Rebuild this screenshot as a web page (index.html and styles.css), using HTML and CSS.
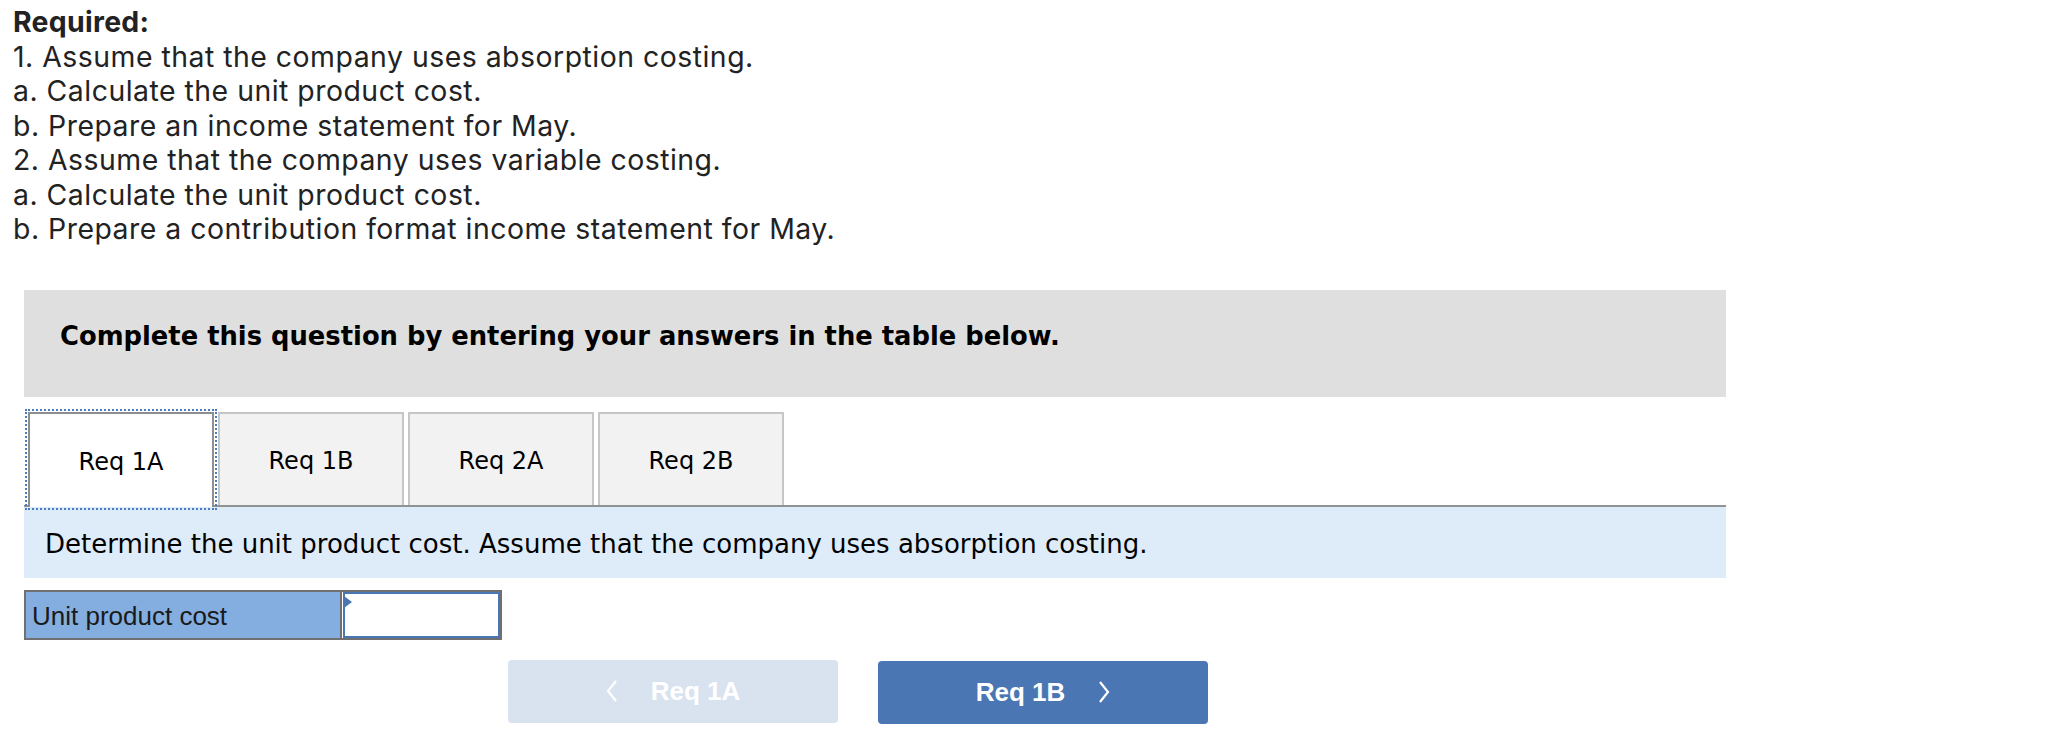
FILE: index.html
```html
<!DOCTYPE html>
<html lang="en">
<head>
<meta charset="utf-8">
<title>Required</title>
<link rel="stylesheet" href="styles.css">
</head>
<body>
<div class="page">
  <div class="required">
    <p class="req-title">Required:</p>
    <p>1. Assume that the company uses absorption costing.</p>
    <p>a. Calculate the unit product cost.</p>
    <p>b. Prepare an income statement for May.</p>
    <p>2. Assume that the company uses variable costing.</p>
    <p>a. Calculate the unit product cost.</p>
    <p>b. Prepare a contribution format income statement for May.</p>
  </div>

  <div class="question">
    <div class="instructions">Complete this question by entering your answers in the table below.</div>

    <div class="tabs">
      <div class="tab active">Req 1A</div>
      <div class="tab">Req 1B</div>
      <div class="tab">Req 2A</div>
      <div class="tab">Req 2B</div>
    </div>

    <div class="prompt">Determine the unit product cost. Assume that the company uses absorption costing.</div>

    <div class="answer">
      <div class="answer-label">Unit product cost</div>
      <div class="answer-input"><span class="marker"></span></div>
    </div>

    <div class="nav">
      <div class="nav-btn prev">
        <svg class="chev" width="12" height="22" viewBox="0 0 12 22"><polyline points="10,1 2,11 10,21" fill="none" stroke="#ffffff" stroke-width="2.2"/></svg>
        <span>Req 1A</span>
      </div>
      <div class="nav-btn next">
        <span>Req 1B</span>
        <svg class="chev" width="12" height="22" viewBox="0 0 12 22"><polyline points="2,1 10,11 2,21" fill="none" stroke="#ffffff" stroke-width="2.2"/></svg>
      </div>
    </div>
  </div>
</div>
</body>
</html>
```

FILE: styles.css
```css
* { box-sizing: border-box; }

html, body {
  margin: 0;
  padding: 0;
  background: #ffffff;
}

.page {
  width: 2056px;
  height: 752px;
  overflow: hidden;
  padding: 5px 0 0 0;
}

.required {
  padding-left: 13px;
  font-family: "Inter", "Lato", sans-serif;
  font-size: 28.4px;
  line-height: 34.5px;
  letter-spacing: 0.5px;
  color: #222222;
}

.required p {
  margin: 0;
}

.required .req-title {
  font-weight: 700;
  letter-spacing: 0.3px;
}

.question {
  margin: 43px 0 0 24px;
  width: 1702px;
}

.instructions {
  background: #dfdfdf;
  height: 107px;
  padding: 30px 0 0 36px;
  font-family: "DejaVu Sans", Verdana, sans-serif;
  font-weight: 700;
  font-size: 25.8px;
  line-height: 32px;
  color: #000000;
}

.tabs {
  display: flex;
  gap: 4px;
  margin-top: 15px;
  padding-left: 4px;
  border-bottom: 2px solid #8f9393;
}

.tab {
  width: 186px;
  height: 93px;
  display: flex;
  align-items: center;
  justify-content: center;
  padding-top: 4px;
  background: #f2f2f2;
  border: 2px solid #c6c6c6;
  border-bottom: none;
  font-family: "DejaVu Sans", Verdana, sans-serif;
  font-size: 24px;
  color: #000000;
}

.tab.active {
  background: #ffffff;
  border-color: #8e8e8e;
  margin-bottom: -2px;
  height: 95px;
  outline: 2px dotted #4a7cc4;
  outline-offset: 1px;
}

.prompt {
  background: #deebf8;
  height: 71px;
  padding: 4px 0 0 21px;
  display: flex;
  align-items: center;
  font-family: "DejaVu Sans", Verdana, sans-serif;
  font-size: 26px;
  color: #000000;
}

.answer {
  display: flex;
  width: 478px;
  height: 50px;
  margin-top: 12px;
  border: 2px solid #707070;
}

.answer-label {
  width: 316px;
  background: #84aee0;
  border-right: 2px solid #707070;
  padding: 3px 0 0 6px;
  display: flex;
  align-items: center;
  font-family: "Liberation Sans", Arial, sans-serif;
  font-size: 26px;
  color: #1a1a1a;
}

.answer-input {
  position: relative;
  flex: 1;
  background: #ffffff;
  border: 2px solid #4a77b4;
  margin-left: 1px;
}

.marker {
  position: absolute;
  left: -1px;
  top: 2px;
  width: 0;
  height: 0;
  border-top: 6px solid transparent;
  border-bottom: 6px solid transparent;
  border-left: 8px solid #4a77b4;
}

.nav {
  display: flex;
  gap: 40px;
  margin: 20px 0 0 484px;
}

.nav-btn {
  width: 330px;
  height: 63px;
  border-radius: 4px;
  display: flex;
  align-items: center;
  justify-content: center;
  gap: 33px;
  font-family: "Liberation Sans", Arial, sans-serif;
  font-weight: 700;
  font-size: 26px;
  color: #ffffff;
}

.nav-btn.prev {
  background: #d9e3ef;
}

.nav-btn.next {
  background: #4a76b4;
  margin-top: 1px;
}

.chev {
  display: block;
}
```
